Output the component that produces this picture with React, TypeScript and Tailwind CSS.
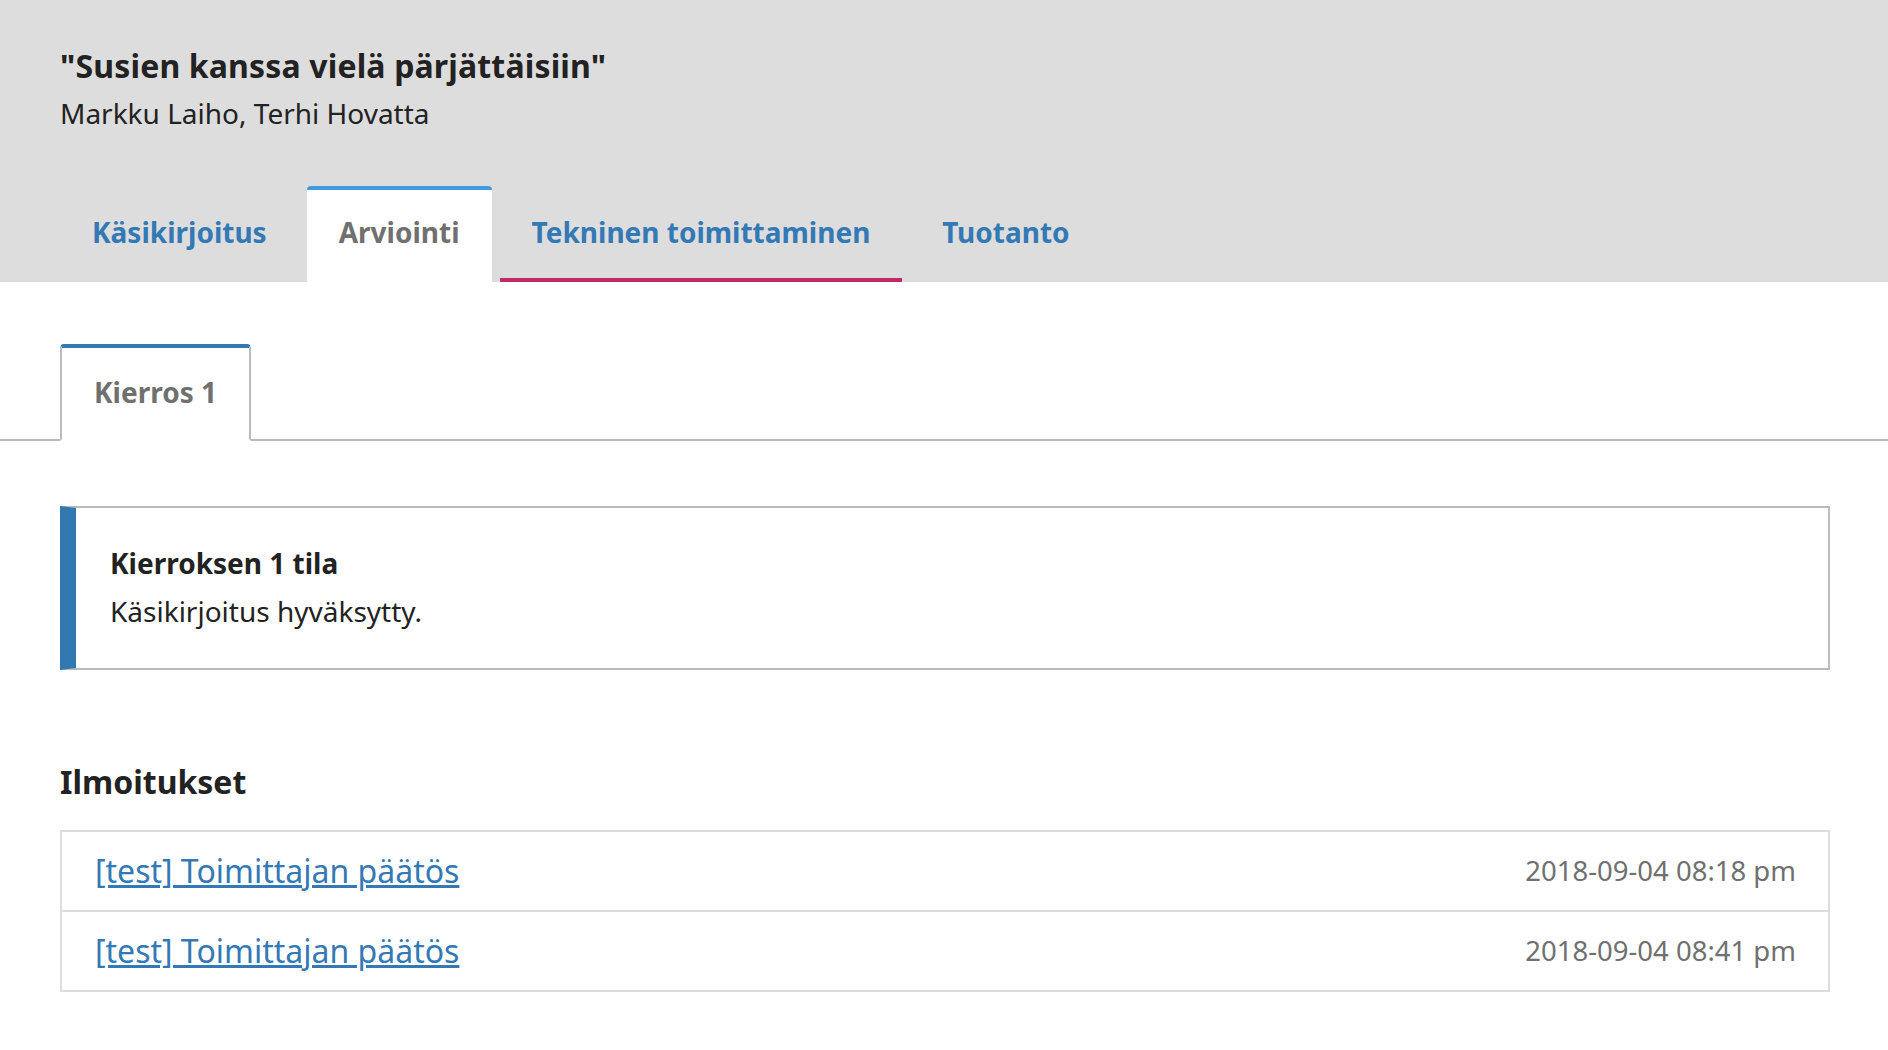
import React from 'react';

const TABS = [
  { label: 'Käsikirjoitus', active: false, focus: false },
  { label: 'Arviointi', active: true, focus: false },
  { label: 'Tekninen toimittaminen', active: false, focus: true },
  { label: 'Tuotanto', active: false, focus: false },
];

const NOTICES = [
  { title: '[test] Toimittajan päätös', date: '2018-09-04 08:18 pm' },
  { title: '[test] Toimittajan päätös', date: '2018-09-04 08:41 pm' },
];

export default function App() {
  return (
    <div className="min-h-[1050px] bg-white text-[#222] font-['Noto_Sans',sans-serif]">
      {/* Header */}
      <header className="bg-[#ddd] pl-[60px] pr-[58px] pt-[46px]">
        <h1 className="text-[32px] leading-[40px] font-bold tracking-[0.15px]">"Susien kanssa vielä pärjättäisiin"</h1>
        <p className="mt-[7px] text-[28px] leading-[40px]">Markku Laiho, Terhi Hovatta</p>

        <nav className="mt-[53px] flex gap-2">
          {TABS.map((tab) => (
            <div
              key={tab.label}
              className={
                'h-[96px] px-8 pt-[22px] border-t-4 text-[28px] leading-[40px] font-bold ' +
                (tab.active
                  ? 'bg-white border-t-[#429be0] rounded-t-[4px] text-[#707070]'
                  : 'border-t-transparent text-[#3379b5]') +
                (tab.focus ? ' border-b-4 border-b-[#c12a69]' : '')
              }
            >
              {tab.label}
            </div>
          ))}
        </nav>
      </header>

      {/* Round tabs */}
      <div className="mt-[62px] flex border-b-2 border-[#bbb] pl-[60px] pr-[58px]">
        <div className="-mb-[2px] h-[97px] px-8 pt-[24px] border-2 border-t-4 border-[#bbb] border-t-[#3278b2] border-b-white bg-white rounded-t-[4px] text-[28px] leading-[40px] font-bold text-[#707070]">
          Kierros 1
        </div>
      </div>

      <main className="pl-[60px] pr-[58px]">
        {/* Status */}
        <section className="mt-[65px] border-2 border-l-[16px] border-[#bbb] border-l-[#3278b0] pl-[34px] pt-[35px] pb-[37px]">
          <h2 className="text-[28px] leading-[40px] font-bold">Kierroksen 1 tila</h2>
          <p className="mt-2 text-[28px] leading-[40px]">Käsikirjoitus hyväksytty.</p>
        </section>

        {/* Notifications */}
        <h2 className="mt-[92px] text-[32px] leading-[40px] font-bold">Ilmoitukset</h2>
        <ul className="mt-[28px] border-2 border-[#ddd]">
          {NOTICES.map((n, i) => (
            <li
              key={i}
              className={
                'flex items-center justify-between pl-[33px] pr-8 ' +
                (i > 0 ? 'h-[80px] border-t-2 border-[#ddd]' : 'h-[78px]')
              }
            >
              <a href="#" className="text-[32px] leading-[40px] text-[#3379b5] underline">
                {n.title}
              </a>
              <span className="text-[27.5px] leading-[40px] text-[#707070]">{n.date}</span>
            </li>
          ))}
        </ul>
      </main>
    </div>
  );
}
